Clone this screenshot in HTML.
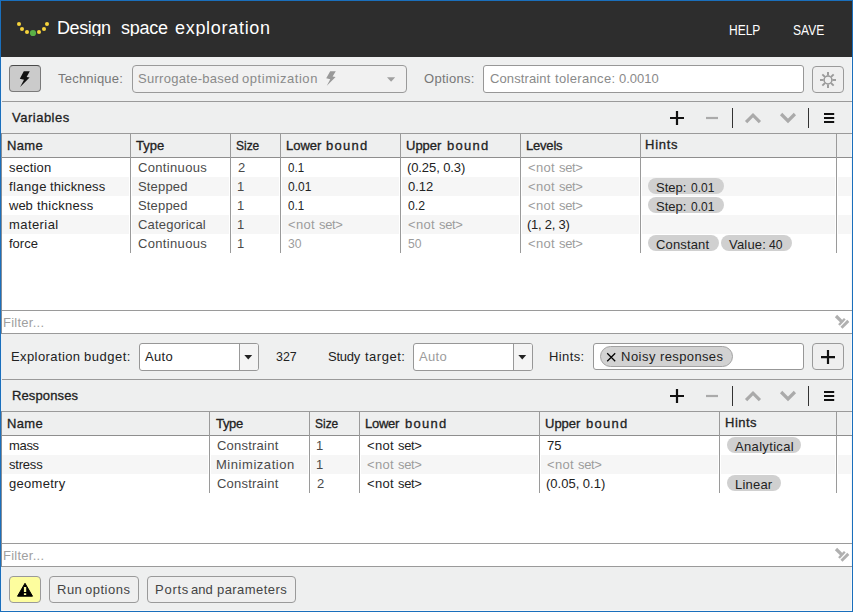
<!DOCTYPE html>
<html><head><meta charset="utf-8"><title>Design space exploration</title>
<style>
*{box-sizing:border-box;margin:0;padding:0}
html,body{width:853px;height:612px;overflow:hidden;background:#1a6fbc}
body{font-family:"Liberation Sans",sans-serif;font-size:13px;color:#222;position:relative}
.a{position:absolute}
.t{position:absolute;white-space:nowrap;transform-origin:0 0}
.w{position:absolute;top:0;transform-origin:0 0}
.btn{border:1px solid #8e8e8e;border-radius:4px;background:#efefef}
.inp{border:1px solid #979797;border-radius:3px;background:#fff}
.pill{border-radius:8px;background:#d0d0d0}
</style></head><body>
<div class="a" style="left:1px;top:1px;width:851px;height:610px;background:#f7f7f7;overflow:hidden">
<div class="a" style="left:0px;top:0px;width:851px;height:56px;background:#2d2d2d"></div>
<svg class="a" style="left:9px;top:14px" width="50" height="30" viewBox="10 15 50 30"><circle cx="19" cy="24" r="2.05" fill="#f6d33c"/><circle cx="22" cy="29" r="2.05" fill="#f6d33c"/><circle cx="27" cy="32" r="2.05" fill="#f6d33c"/><circle cx="33" cy="33" r="3.1" fill="#5bb046"/><circle cx="39" cy="32" r="2.05" fill="#f6d33c"/><circle cx="44" cy="29" r="2.05" fill="#f6d33c"/><circle cx="47" cy="24" r="2.05" fill="#f6d33c"/></svg>
<div class="t" style="left:0;top:17px;line-height:21px;height:21px;font-size:18px;color:#fff;overflow:hidden;height:18px;width:851px;"><span class="w" style="left:56px;letter-spacing:-0.4px;">Design</span> <span class="w" style="left:120px;letter-spacing:-0.25px;">space</span> <span class="w" style="left:174px;letter-spacing:0.7px;">exploration</span></div>
<div class="t" style="left:728px;transform:scaleX(0.8571);top:21px;line-height:17px;height:17px;font-size:14px;color:#fff;">HELP</div>
<div class="t" style="left:792px;transform:scaleX(0.8611);top:21px;line-height:17px;height:17px;font-size:14px;color:#fff;">SAVE</div>
<div class="a" style="left:0px;top:56px;width:850px;height:44px;background:#eff0f0"></div>
<div class="a btn" style="left:8px;top:64px;width:32px;height:27px;background:#cbcbcb;border-color:#7a7a7a;border-top-color:#4a4a4a"></div>
<svg class="a" style="left:14px;top:67px" width="20" height="22" viewBox="15 68 20 22"><path d="M23.800 71.300L29.800 71.300L26.600 77L29.600 77.400L20.100 86.900L24 79.800L19.800 78.800Z" fill="#111"/></svg>
<div class="t" style="left:57px;letter-spacing:0.222px;top:70px;line-height:16px;height:16px;color:#777;">Technique:</div>
<div class="a btn" style="left:131px;top:64px;width:275px;height:28px;background:#f1f1f1;border-color:#9a9a9a"></div>
<div class="t" style="left:0;top:70px;line-height:16px;height:16px;color:#8a8a8a;"><span class="w" style="left:137px;letter-spacing:0.286px;">Surrogate-based</span> <span class="w" style="left:241px;letter-spacing:0.545px;">optimization</span></div>
<svg class="a" style="left:321px;top:67px" width="18" height="22" viewBox="322 68 18 22"><path d="M330.200 71.300L335.800 71.300L332.600 76.600L335.600 77L326.800 85.700L330.300 79.300L326.200 78.300Z" fill="#999"/></svg>
<svg class="a" style="left:383px;top:73px" width="14" height="10" viewBox="384 74 14 10"><path d="M387 77.300H395.200L391.100 81.800Z" fill="#a0a0a0"/></svg>
<div class="t" style="left:423px;letter-spacing:0.286px;top:70px;line-height:16px;height:16px;color:#777;">Options:</div>
<div class="a inp" style="left:482px;top:64px;width:321px;height:28px;"></div>
<div class="t" style="left:0;top:70px;line-height:16px;height:16px;color:#8a8a8a;"><span class="w" style="left:489px;letter-spacing:0.111px;">Constraint</span> <span class="w" style="left:554px;letter-spacing:0.333px;">tolerance:</span> <span class="w" style="left:618px;">0.0010</span></div>
<div class="a btn" style="left:811px;top:65px;width:32px;height:27px;border-color:#9a9a9a"></div>
<svg class="a" style="left:815px;top:67px" width="26" height="26" viewBox="816 68 26 26"><g stroke="#999" stroke-width="1.900" fill="none"><circle cx="828" cy="80" r="3.900" stroke-width="1.500"/><path d="M828 72V75.6" transform="rotate(0 828 80)"/><path d="M828 72V75.6" transform="rotate(45 828 80)"/><path d="M828 72V75.6" transform="rotate(90 828 80)"/><path d="M828 72V75.6" transform="rotate(135 828 80)"/><path d="M828 72V75.6" transform="rotate(180 828 80)"/><path d="M828 72V75.6" transform="rotate(225 828 80)"/><path d="M828 72V75.6" transform="rotate(270 828 80)"/><path d="M828 72V75.6" transform="rotate(315 828 80)"/></g></svg>
<div class="a" style="left:0px;top:100px;width:851px;height:1px;background:#9a9a9a"></div>
<div class="a" style="left:0px;top:101px;width:850px;height:31px;background:#eeefef"></div>
<div class="t" style="left:11px;letter-spacing:0.5px;top:109px;line-height:16px;height:16px;-webkit-text-stroke:0.3px currentColor;">Variables</div>
<svg class="a" style="left:659px;top:101px" width="190" height="31" viewBox="660 102 190 31"><g transform="translate(0 0)" fill="none"><path d="M670 118h14M677 111v14" stroke="#111" stroke-width="2.200"/><path d="M706 118h12" stroke="#aaa" stroke-width="2.200"/><path d="M732.500 108v20M808.500 108v20" stroke="#333" stroke-width="1"/><path d="M746.100 122.100L753 115.200L759.900 122.100" stroke="#aaa" stroke-width="3.200"/><path d="M781.100 114L788 120.900L794.900 114" stroke="#aaa" stroke-width="3.200"/><path d="M824 114h10.200M824 118h10.200M824 122h10.200" stroke="#111" stroke-width="2"/></g></svg>
<div class="a" style="left:0px;top:132px;width:851px;height:1px;background:#9a9a9a"></div>
<div class="a" style="left:0px;top:133px;width:850px;height:23px;background:#eeefef"></div>
<div class="a" style="left:0px;top:156px;width:851px;height:1px;background:#8e8e8e"></div>
<div class="a" style="left:0px;top:157px;width:850px;height:152px;background:#fff"></div>
<div class="a" style="left:1px;top:176px;width:127px;height:19px;background:#f6f6f6"></div>
<div class="a" style="left:131px;top:176px;width:97px;height:19px;background:#f6f6f6"></div>
<div class="a" style="left:231px;top:176px;width:47px;height:19px;background:#f6f6f6"></div>
<div class="a" style="left:281px;top:176px;width:117px;height:19px;background:#f6f6f6"></div>
<div class="a" style="left:401px;top:176px;width:117px;height:19px;background:#f6f6f6"></div>
<div class="a" style="left:521px;top:176px;width:117px;height:19px;background:#f6f6f6"></div>
<div class="a" style="left:641px;top:176px;width:193px;height:19px;background:#f6f6f6"></div>
<div class="a" style="left:837px;top:176px;width:13px;height:19px;background:#f6f6f6"></div>
<div class="a" style="left:1px;top:214px;width:127px;height:19px;background:#f6f6f6"></div>
<div class="a" style="left:131px;top:214px;width:97px;height:19px;background:#f6f6f6"></div>
<div class="a" style="left:231px;top:214px;width:47px;height:19px;background:#f6f6f6"></div>
<div class="a" style="left:281px;top:214px;width:117px;height:19px;background:#f6f6f6"></div>
<div class="a" style="left:401px;top:214px;width:117px;height:19px;background:#f6f6f6"></div>
<div class="a" style="left:521px;top:214px;width:117px;height:19px;background:#f6f6f6"></div>
<div class="a" style="left:641px;top:214px;width:193px;height:19px;background:#f6f6f6"></div>
<div class="a" style="left:837px;top:214px;width:13px;height:19px;background:#f6f6f6"></div>
<div class="a" style="left:129px;top:133px;width:1px;height:119px;background:#9a9a9a"></div>
<div class="a" style="left:229px;top:133px;width:1px;height:119px;background:#9a9a9a"></div>
<div class="a" style="left:279px;top:133px;width:1px;height:119px;background:#9a9a9a"></div>
<div class="a" style="left:399px;top:133px;width:1px;height:119px;background:#9a9a9a"></div>
<div class="a" style="left:519px;top:133px;width:1px;height:119px;background:#9a9a9a"></div>
<div class="a" style="left:639px;top:133px;width:1px;height:119px;background:#9a9a9a"></div>
<div class="a" style="left:835px;top:133px;width:1px;height:119px;background:#9a9a9a"></div>
<div class="t" style="left:6px;letter-spacing:0.333px;top:137px;line-height:16px;height:16px;-webkit-text-stroke:0.3px currentColor;">Name</div>
<div class="t" style="left:135px;top:137px;line-height:16px;height:16px;-webkit-text-stroke:0.3px currentColor;">Type</div>
<div class="t" style="left:235px;transform:scaleX(0.92);top:137px;line-height:16px;height:16px;-webkit-text-stroke:0.3px currentColor;">Size</div>
<div class="t" style="left:0;top:137px;line-height:16px;height:16px;-webkit-text-stroke:0.3px currentColor;"><span class="w" style="left:285px;">Lower</span> <span class="w" style="left:325px;letter-spacing:1.25px;">bound</span></div>
<div class="t" style="left:0;top:137px;line-height:16px;height:16px;-webkit-text-stroke:0.3px currentColor;"><span class="w" style="left:405px;">Upper</span> <span class="w" style="left:446px;letter-spacing:1.25px;">bound</span></div>
<div class="t" style="left:525px;letter-spacing:-0.2px;top:137px;line-height:16px;height:16px;-webkit-text-stroke:0.3px currentColor;">Levels</div>
<div class="t" style="left:644px;letter-spacing:0.75px;top:136px;line-height:16px;height:16px;-webkit-text-stroke:0.3px currentColor;">Hints</div>
<div class="t" style="left:8px;letter-spacing:0.167px;top:159px;line-height:16px;height:16px;">section</div>
<div class="t" style="left:137px;letter-spacing:0.333px;top:159px;line-height:16px;height:16px;color:#4a4a4a;">Continuous</div>
<div class="t" style="left:237px;top:159px;line-height:16px;height:16px;color:#4a4a4a;">2</div>
<div class="t" style="left:287px;transform:scaleX(0.8889);top:159px;line-height:16px;height:16px;">0.1</div>
<div class="t" style="left:406px;letter-spacing:-0.1px;top:159px;line-height:16px;height:16px;">(0.25, 0.3)</div>
<div class="t" style="left:0;top:159px;line-height:16px;height:16px;color:#9c9c9c;"><span class="w" style="left:527px;letter-spacing:0.333px;">&lt;not</span> <span class="w" style="left:558px;letter-spacing:-0.333px;">set&gt;</span></div>
<div class="t" style="left:0;top:178px;line-height:16px;height:16px;"><span class="w" style="left:8px;letter-spacing:0.4px;">flange</span> <span class="w" style="left:49px;letter-spacing:0.125px;">thickness</span></div>
<div class="t" style="left:137px;letter-spacing:0.167px;top:178px;line-height:16px;height:16px;color:#4a4a4a;">Stepped</div>
<div class="t" style="left:236px;top:178px;line-height:16px;height:16px;color:#4a4a4a;">1</div>
<div class="t" style="left:287px;transform:scaleX(0.92);top:178px;line-height:16px;height:16px;">0.01</div>
<div class="t" style="left:407px;top:178px;line-height:16px;height:16px;">0.12</div>
<div class="t" style="left:0;top:178px;line-height:16px;height:16px;color:#9c9c9c;"><span class="w" style="left:527px;letter-spacing:0.333px;">&lt;not</span> <span class="w" style="left:558px;letter-spacing:-0.333px;">set&gt;</span></div>
<div class="a pill" style="left:647px;top:177px;width:76px;height:16px;"></div>
<div class="t" style="left:0;top:179px;line-height:16px;height:16px;"><span class="w" style="left:655px;">Step:</span> <span class="w" style="left:690px;transform:scaleX(0.92);">0.01</span></div>
<div class="t" style="left:0;top:197px;line-height:16px;height:16px;"><span class="w" style="left:8px;">web</span> <span class="w" style="left:36px;letter-spacing:0.25px;">thickness</span></div>
<div class="t" style="left:137px;letter-spacing:0.167px;top:197px;line-height:16px;height:16px;color:#4a4a4a;">Stepped</div>
<div class="t" style="left:236px;top:197px;line-height:16px;height:16px;color:#4a4a4a;">1</div>
<div class="t" style="left:287px;transform:scaleX(0.8889);top:197px;line-height:16px;height:16px;">0.1</div>
<div class="t" style="left:407px;transform:scaleX(0.9444);top:197px;line-height:16px;height:16px;">0.2</div>
<div class="t" style="left:0;top:197px;line-height:16px;height:16px;color:#9c9c9c;"><span class="w" style="left:527px;letter-spacing:0.333px;">&lt;not</span> <span class="w" style="left:558px;letter-spacing:-0.333px;">set&gt;</span></div>
<div class="a pill" style="left:647px;top:196px;width:76px;height:16px;"></div>
<div class="t" style="left:0;top:198px;line-height:16px;height:16px;"><span class="w" style="left:655px;">Step:</span> <span class="w" style="left:690px;transform:scaleX(0.92);">0.01</span></div>
<div class="t" style="left:8px;letter-spacing:0.429px;top:216px;line-height:16px;height:16px;">material</div>
<div class="t" style="left:137px;letter-spacing:0.2px;top:216px;line-height:16px;height:16px;color:#4a4a4a;">Categorical</div>
<div class="t" style="left:236px;top:216px;line-height:16px;height:16px;color:#4a4a4a;">1</div>
<div class="t" style="left:0;top:216px;line-height:16px;height:16px;color:#9c9c9c;"><span class="w" style="left:287px;letter-spacing:0.333px;">&lt;not</span> <span class="w" style="left:318px;letter-spacing:-0.333px;">set&gt;</span></div>
<div class="t" style="left:0;top:216px;line-height:16px;height:16px;color:#9c9c9c;"><span class="w" style="left:407px;letter-spacing:0.333px;">&lt;not</span> <span class="w" style="left:438px;letter-spacing:-0.333px;">set&gt;</span></div>
<div class="t" style="left:526px;letter-spacing:-0.25px;top:216px;line-height:16px;height:16px;">(1, 2, 3)</div>
<div class="t" style="left:8px;top:235px;line-height:16px;height:16px;">force</div>
<div class="t" style="left:137px;letter-spacing:0.333px;top:235px;line-height:16px;height:16px;color:#4a4a4a;">Continuous</div>
<div class="t" style="left:236px;top:235px;line-height:16px;height:16px;color:#4a4a4a;">1</div>
<div class="t" style="left:287px;transform:scaleX(0.9333);top:235px;line-height:16px;height:16px;color:#9c9c9c;">30</div>
<div class="t" style="left:407px;transform:scaleX(0.9333);top:235px;line-height:16px;height:16px;color:#9c9c9c;">50</div>
<div class="t" style="left:0;top:235px;line-height:16px;height:16px;color:#9c9c9c;"><span class="w" style="left:527px;letter-spacing:0.333px;">&lt;not</span> <span class="w" style="left:558px;letter-spacing:-0.333px;">set&gt;</span></div>
<div class="a pill" style="left:647px;top:234px;width:71px;height:16px;"></div>
<div class="t" style="left:655px;letter-spacing:0.143px;top:236px;line-height:16px;height:16px;">Constant</div>
<div class="a pill" style="left:720px;top:234px;width:71px;height:16px;"></div>
<div class="t" style="left:0;top:236px;line-height:16px;height:16px;"><span class="w" style="left:728px;letter-spacing:0.2px;">Value:</span> <span class="w" style="left:768px;transform:scaleX(0.9333);">40</span></div>
<div class="a" style="left:0px;top:309px;width:851px;height:1px;background:#9a9a9a"></div>
<div class="a" style="left:0px;top:310px;width:850px;height:22px;background:#fff"></div>
<div class="t" style="left:2px;letter-spacing:0.25px;top:314px;line-height:16px;height:16px;color:#a0a0a0;">Filter...</div>
<div class="a" style="left:0px;top:332px;width:851px;height:1px;background:#9a9a9a"></div>
<div class="a" style="left:0px;top:132px;width:1px;height:201px;background:#878d95"></div>
<svg class="a" style="left:831px;top:312px" width="18" height="18" viewBox="832 313 18 18"><g transform="translate(0 0)" stroke="#b0b0b0" fill="none"><path d="M836 316L842.200 322.200" stroke-width="3.200"/><path d="M839 325L844.800 318.800" stroke-width="2.400"/><path d="M841.500 327.700L848.300 320.900" stroke-width="2.900"/></g></svg>
<div class="a" style="left:0px;top:333px;width:850px;height:45px;background:#eff0f0"></div>
<div class="t" style="left:0;top:348px;line-height:16px;height:16px;"><span class="w" style="left:10px;letter-spacing:0.4px;">Exploration</span> <span class="w" style="left:83px;letter-spacing:0.5px;">budget:</span></div>
<div class="a inp" style="left:138px;top:342px;width:120px;height:28px;overflow:hidden"><div class="a" style="left:99px;top:0;width:20px;height:26px;background:#f4f4f4;border-left:1px solid #999"></div></div>
<div class="t" style="left:144px;letter-spacing:0.333px;top:348px;line-height:16px;height:16px;">Auto</div>
<svg class="a" style="left:242px;top:352px" width="12" height="9" viewBox="243 353 12 9"><path d="M244.3 355H252.2L248.25 359.600Z" fill="#222"/></svg>
<div class="t" style="left:275px;transform:scaleX(0.9545);top:348px;line-height:16px;height:16px;">327</div>
<div class="t" style="left:0;top:348px;line-height:16px;height:16px;"><span class="w" style="left:327px;letter-spacing:-0.25px;">Study</span> <span class="w" style="left:364px;letter-spacing:0.5px;">target:</span></div>
<div class="a inp" style="left:412px;top:342px;width:120px;height:28px;overflow:hidden"><div class="a" style="left:99px;top:0;width:20px;height:26px;background:#f4f4f4;border-left:1px solid #999"></div></div>
<div class="t" style="left:418px;letter-spacing:0.333px;top:348px;line-height:16px;height:16px;color:#9c9c9c;">Auto</div>
<svg class="a" style="left:516px;top:352px" width="12" height="9" viewBox="517 353 12 9"><path d="M518.3 355H526.2L522.25 359.600Z" fill="#222"/></svg>
<div class="t" style="left:548px;letter-spacing:0.4px;top:348px;line-height:16px;height:16px;">Hints:</div>
<div class="a inp" style="left:592px;top:342px;width:211px;height:27px;"></div>
<div class="a" style="left:599px;top:345px;width:133px;height:21px;background:#d2d2d2;border:1px solid #a2a2a2;border-radius:11px"></div>
<svg class="a" style="left:604px;top:350px" width="13" height="13" viewBox="605 351 13 13"><path d="M607.200 353.200l8 8M615.200 353.200l-8 8" stroke="#000" stroke-width="1.250" fill="none"/></svg>
<div class="t" style="left:0;top:348px;line-height:16px;height:16px;"><span class="w" style="left:620px;letter-spacing:0.5px;">Noisy</span> <span class="w" style="left:659px;letter-spacing:0.375px;">responses</span></div>
<div class="a btn" style="left:811px;top:342px;width:32px;height:27px;border-color:#9a9a9a"></div>
<svg class="a" style="left:818px;top:348px" width="18" height="18" viewBox="819 349 18 18"><path d="M821 357.100h14M828 350.100v14" stroke="#111" stroke-width="2.200" fill="none"/></svg>
<div class="a" style="left:0px;top:378px;width:851px;height:1px;background:#9a9a9a"></div>
<div class="a" style="left:0px;top:379px;width:850px;height:31px;background:#eeefef"></div>
<div class="t" style="left:11px;letter-spacing:0.125px;top:387px;line-height:16px;height:16px;-webkit-text-stroke:0.3px currentColor;">Responses</div>
<svg class="a" style="left:659px;top:379px" width="190" height="31" viewBox="660 380 190 31"><g transform="translate(0 278)" fill="none"><path d="M670 118h14M677 111v14" stroke="#111" stroke-width="2.200"/><path d="M706 118h12" stroke="#aaa" stroke-width="2.200"/><path d="M732.500 108v20M808.500 108v20" stroke="#333" stroke-width="1"/><path d="M746.100 122.100L753 115.200L759.900 122.100" stroke="#aaa" stroke-width="3.200"/><path d="M781.100 114L788 120.900L794.900 114" stroke="#aaa" stroke-width="3.200"/><path d="M824 114h10.200M824 118h10.200M824 122h10.200" stroke="#111" stroke-width="2"/></g></svg>
<div class="a" style="left:0px;top:410px;width:851px;height:1px;background:#9a9a9a"></div>
<div class="a" style="left:0px;top:411px;width:850px;height:23px;background:#eeefef"></div>
<div class="a" style="left:0px;top:434px;width:851px;height:1px;background:#8e8e8e"></div>
<div class="a" style="left:0px;top:435px;width:850px;height:107px;background:#fff"></div>
<div class="a" style="left:1px;top:454px;width:206px;height:19px;background:#f6f6f6"></div>
<div class="a" style="left:210px;top:454px;width:97px;height:19px;background:#f6f6f6"></div>
<div class="a" style="left:310px;top:454px;width:47px;height:19px;background:#f6f6f6"></div>
<div class="a" style="left:360px;top:454px;width:177px;height:19px;background:#f6f6f6"></div>
<div class="a" style="left:540px;top:454px;width:177px;height:19px;background:#f6f6f6"></div>
<div class="a" style="left:720px;top:454px;width:114px;height:19px;background:#f6f6f6"></div>
<div class="a" style="left:837px;top:454px;width:13px;height:19px;background:#f6f6f6"></div>
<div class="a" style="left:208px;top:411px;width:1px;height:81px;background:#9a9a9a"></div>
<div class="a" style="left:308px;top:411px;width:1px;height:81px;background:#9a9a9a"></div>
<div class="a" style="left:358px;top:411px;width:1px;height:81px;background:#9a9a9a"></div>
<div class="a" style="left:538px;top:411px;width:1px;height:81px;background:#9a9a9a"></div>
<div class="a" style="left:718px;top:411px;width:1px;height:81px;background:#9a9a9a"></div>
<div class="a" style="left:835px;top:411px;width:1px;height:81px;background:#9a9a9a"></div>
<div class="t" style="left:6px;letter-spacing:0.333px;top:415px;line-height:16px;height:16px;-webkit-text-stroke:0.3px currentColor;">Name</div>
<div class="t" style="left:215px;letter-spacing:-0.333px;top:415px;line-height:16px;height:16px;-webkit-text-stroke:0.3px currentColor;">Type</div>
<div class="t" style="left:314px;transform:scaleX(0.92);top:415px;line-height:16px;height:16px;-webkit-text-stroke:0.3px currentColor;">Size</div>
<div class="t" style="left:0;top:415px;line-height:16px;height:16px;-webkit-text-stroke:0.3px currentColor;"><span class="w" style="left:364px;letter-spacing:-0.25px;">Lower</span> <span class="w" style="left:404px;letter-spacing:1.25px;">bound</span></div>
<div class="t" style="left:0;top:415px;line-height:16px;height:16px;-webkit-text-stroke:0.3px currentColor;"><span class="w" style="left:544px;">Upper</span> <span class="w" style="left:585px;letter-spacing:1.25px;">bound</span></div>
<div class="t" style="left:724px;letter-spacing:0.5px;top:414px;line-height:16px;height:16px;-webkit-text-stroke:0.3px currentColor;">Hints</div>
<div class="t" style="left:8px;letter-spacing:-0.333px;top:437px;line-height:16px;height:16px;">mass</div>
<div class="t" style="left:216px;letter-spacing:0.222px;top:437px;line-height:16px;height:16px;color:#4a4a4a;">Constraint</div>
<div class="t" style="left:315px;top:437px;line-height:16px;height:16px;color:#4a4a4a;">1</div>
<div class="t" style="left:0;top:437px;line-height:16px;height:16px;"><span class="w" style="left:366px;letter-spacing:0.333px;">&lt;not</span> <span class="w" style="left:397px;letter-spacing:-0.333px;">set&gt;</span></div>
<div class="t" style="left:546px;top:437px;line-height:16px;height:16px;">75</div>
<div class="a pill" style="left:726px;top:436px;width:74px;height:16px;"></div>
<div class="t" style="left:734px;letter-spacing:0.333px;top:438px;line-height:16px;height:16px;">Analytical</div>
<div class="t" style="left:8px;letter-spacing:-0.2px;top:456px;line-height:16px;height:16px;">stress</div>
<div class="t" style="left:215px;letter-spacing:0.545px;top:456px;line-height:16px;height:16px;color:#4a4a4a;">Minimization</div>
<div class="t" style="left:315px;top:456px;line-height:16px;height:16px;color:#4a4a4a;">1</div>
<div class="t" style="left:0;top:456px;line-height:16px;height:16px;color:#9c9c9c;"><span class="w" style="left:366px;letter-spacing:0.333px;">&lt;not</span> <span class="w" style="left:397px;letter-spacing:-0.333px;">set&gt;</span></div>
<div class="t" style="left:0;top:456px;line-height:16px;height:16px;color:#9c9c9c;"><span class="w" style="left:546px;letter-spacing:0.333px;">&lt;not</span> <span class="w" style="left:577px;letter-spacing:-0.333px;">set&gt;</span></div>
<div class="t" style="left:8px;letter-spacing:0.286px;top:475px;line-height:16px;height:16px;">geometry</div>
<div class="t" style="left:216px;letter-spacing:0.222px;top:475px;line-height:16px;height:16px;color:#4a4a4a;">Constraint</div>
<div class="t" style="left:316px;top:475px;line-height:16px;height:16px;color:#4a4a4a;">2</div>
<div class="t" style="left:0;top:475px;line-height:16px;height:16px;"><span class="w" style="left:366px;letter-spacing:0.333px;">&lt;not</span> <span class="w" style="left:397px;letter-spacing:-0.333px;">set&gt;</span></div>
<div class="t" style="left:545px;top:475px;line-height:16px;height:16px;">(0.05, 0.1)</div>
<div class="a pill" style="left:726px;top:474px;width:54px;height:16px;"></div>
<div class="t" style="left:734px;letter-spacing:0.2px;top:476px;line-height:16px;height:16px;">Linear</div>
<div class="a" style="left:0px;top:542px;width:851px;height:1px;background:#9a9a9a"></div>
<div class="a" style="left:0px;top:543px;width:850px;height:22px;background:#fff"></div>
<div class="t" style="left:2px;letter-spacing:0.25px;top:547px;line-height:16px;height:16px;color:#a0a0a0;">Filter...</div>
<div class="a" style="left:0px;top:565px;width:851px;height:1px;background:#9a9a9a"></div>
<div class="a" style="left:0px;top:410px;width:1px;height:156px;background:#878d95"></div>
<svg class="a" style="left:831px;top:545px" width="18" height="18" viewBox="832 546 18 18"><g transform="translate(0 233)" stroke="#b0b0b0" fill="none"><path d="M836 316L842.200 322.200" stroke-width="3.200"/><path d="M839 325L844.800 318.800" stroke-width="2.400"/><path d="M841.500 327.700L848.300 320.900" stroke-width="2.900"/></g></svg>
<div class="a" style="left:0px;top:566px;width:850px;height:44px;background:#eeefef"></div>
<div class="a btn" style="left:8px;top:575px;width:32px;height:27px;background:#fdfd9e;border-color:#9a9a9a"></div>
<svg class="a" style="left:14px;top:580px" width="20" height="18" viewBox="15 581 20 18"><path d="M25 583.300L32.500 596.200H17.500Z" fill="#000" stroke="#000" stroke-width="1" stroke-linejoin="round"/><path d="M23.900 587h2.300v5h-2.300zM23.900 593.300h2.300v1.800h-2.300z" fill="#fdfd9e"/></svg>
<div class="a btn" style="left:48px;top:575px;width:90px;height:27px;border-color:#9a9a9a"></div>
<div class="t" style="left:0;top:581px;line-height:16px;height:16px;color:#444;"><span class="w" style="left:56px;letter-spacing:0.5px;">Run</span> <span class="w" style="left:84px;letter-spacing:0.5px;">options</span></div>
<div class="a btn" style="left:146px;top:575px;width:149px;height:27px;border-color:#9a9a9a"></div>
<div class="t" style="left:0;top:581px;line-height:16px;height:16px;color:#444;"><span class="w" style="left:154px;letter-spacing:0.75px;">Ports</span> <span class="w" style="left:190px;">and</span> <span class="w" style="left:216px;letter-spacing:0.444px;">parameters</span></div>
<div class="a" style="left:0px;top:609px;width:851px;height:1px;background:#f8f8f8"></div>
<div class="a" style="left:0px;top:56px;width:1px;height:76px;background:#eaeff5"></div>
<div class="a" style="left:0px;top:333px;width:1px;height:77px;background:#eaeff5"></div>
<div class="a" style="left:0px;top:566px;width:1px;height:44px;background:#eaeff5"></div>
</div>
</body></html>
